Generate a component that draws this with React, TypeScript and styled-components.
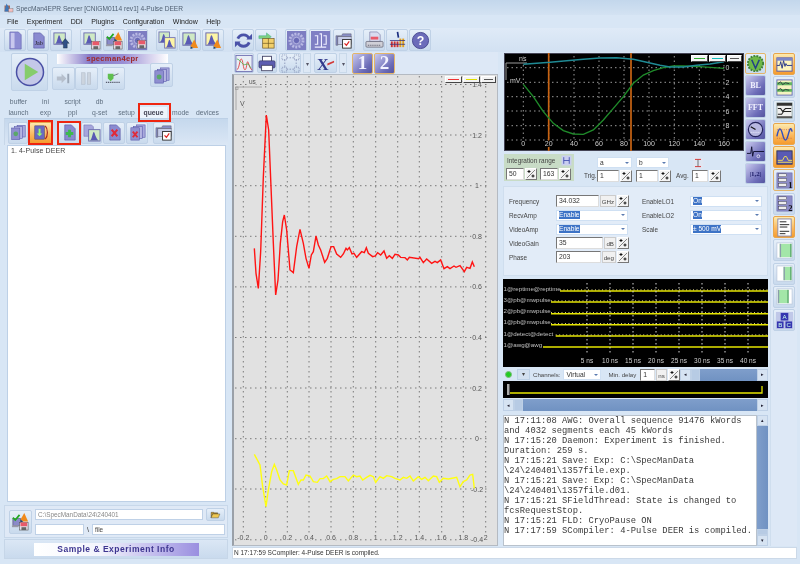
import React from "react";
import styled, { createGlobalStyle } from "styled-components";

const Global = createGlobalStyle`
  html, body { margin: 0; padding: 0; background: #d8e6f5; }
  * { box-sizing: border-box; }
`;

const Page = styled.div`
  width: 800px; height: 564px; overflow: hidden; display: flex; flex-direction: column;
  background: #d8e6f5; font-family: "Liberation Sans", Arial, sans-serif; font-size: 7px; color: #333;
  filter: blur(0.4px);
`;
const TitleBar = styled.div`
  height: 15px; flex: none; display: flex; align-items: center; gap: 2px; padding: 1px 0 0 4px;
  background: linear-gradient(#c3d7ec, #d3e2f2); font-size: 6.6px; color: #4f5f72;
`;
const MenuBar = styled.div`
  height: 13px; flex: none; display: flex; align-items: center; gap: 8.5px; padding-left: 7px;
  font-size: 7px; color: #222;
`;
const MainToolbar = styled.div`
  height: 24px; flex: none; display: flex; align-items: center; gap: 8px; padding-left: 4px;
  background: linear-gradient(#dfeaf7, #d2e1f2);
`;
const Group = styled.div<{ $gap?: number; $ml?: number; $mt?: number }>`
  display: flex; gap: ${p => p.$gap ?? 1}px; align-items: center;
  margin-left: ${p => p.$ml ?? 0}px; margin-top: ${p => p.$mt ?? 0}px;
`;
const ToolBtn = styled.div<{ $w?: number; $h?: number; $active?: boolean; $ring?: boolean }>`
  position: relative; flex: none; width: ${p => p.$w ?? 22}px; height: ${p => p.$h ?? 22}px;
  display: flex; align-items: center; justify-content: center; border-radius: 2px;
  border: 1px solid ${p => (p.$active ? "#e8a64c" : p.$ring ? "#e3b56a" : "#bfd1e6")};
  background: ${p => (p.$active ? "linear-gradient(#fdeaae, #fbb65a 60%, #f59c2f)" : "linear-gradient(#e6eff9, #c9daed)")};
`;
const Tile = styled(ToolBtn)`
  font-family: "Liberation Serif", serif; font-weight: 700; color: #f2f2ff;
  background: linear-gradient(135deg, #c9c9ee, #6c6cb8 70%, #55559f);
`;
const BigTile = styled(Tile)`
  font-size: 19px;
`;
const Drop = styled.div`
  width: 8px; height: 20px; display: flex; align-items: center; justify-content: center;
  border: 1px solid #c9d9ea; font-size: 6px; color: #556; background: #dde8f5;
`;
const RedFrame = styled.span<{ $inset: string }>`
  position: absolute; inset: ${p => p.$inset}; border: 2px solid #ee2510; pointer-events: none;
`;
const Body = styled.div`
  flex: 1; min-height: 0; display: flex; gap: 4px; padding: 0 3px 5px 4px;
`;
const LeftCol = styled.div`
  width: 224px; flex: none; display: flex; flex-direction: column;
`;
const CtrlPanel = styled.div`
  height: 44px; flex: none; display: flex; gap: 4px; padding: 1px 0 0 7px;
`;
const PlayBox = styled(ToolBtn)`
  width: 37px; height: 38px;
`;
const CtrlSide = styled.div`
  display: flex; flex-direction: column; gap: 3px; padding-top: 1px;
`;
const Banner = styled.div`
  width: 111px; height: 10px; margin-left: 5px; text-align: center; line-height: 10px; font-weight: 700;
  font-size: 7.6px; letter-spacing: 0.3px; color: #9e2a2a;
  background: linear-gradient(90deg, #fff 0, #8478c8 30%, #9a8fd4 60%, #fff 100%);
`;
const CtrlRow = styled.div`
  display: flex; align-items: flex-start;
`;
const Tabs = styled.div`
  height: 22px; flex: none; display: grid; grid-template-columns: repeat(8, 27px); grid-auto-rows: 11px;
  padding: 0 0 0 1px; text-align: center; line-height: 11px; font-size: 6.8px; color: #5f6f80;
`;
const Tab = styled.div<{ $active?: boolean }>`
  position: relative; font-weight: ${p => (p.$active ? 700 : 400)};
  background: ${p => (p.$active ? "#edf4fc" : "transparent")}; color: ${p => (p.$active ? "#445" : "inherit")};
`;
const QueueBar = styled.div`
  height: 27px; flex: none; display: flex; align-items: center; padding: 1px 0 0 3px; gap: 1px;
  background: linear-gradient(#c5d8ed, #dbe7f5); border-top: 1px solid #bcd0e6; border-left: 1px solid #c7d7e9;
`;
const QueueList = styled.div`
  flex: 1; margin: 0 2px 0 3px; background: #fff; border: 1px solid #bdd0e6; padding: 0 0 0 3px;
  font-size: 7px; line-height: 9px; color: #444; letter-spacing: 0.1px;
`;
const PathPanel = styled.div`
  height: 33px; flex: none; margin-top: 3px; display: flex; align-items: center; gap: 3px; padding: 0 2px 0 4px;
  background: #dfe9f6; border: 1px solid #c8d8ea;
`;
const PathFields = styled.div`
  flex: 1; display: flex; flex-direction: column; gap: 3px;
`;
const PathRow = styled.div`
  display: flex; gap: 3px; align-items: center;
`;
const PathInput = styled.div<{ $w?: number; $grow?: boolean; $dark?: boolean }>`
  height: 11px; width: ${p => (p.$w ? p.$w + "px" : "auto")}; flex: ${p => (p.$grow ? 1 : "none")};
  background: #fff; border: 1px solid #bfd1e7; padding-left: 2px; line-height: 9px; font-size: 6.4px;
  color: ${p => (p.$dark ? "#444" : "#888")};
`;
const SamplePanel = styled.div`
  height: 20px; flex: none; margin-top: 1px; display: flex; align-items: center; justify-content: center;
  background: linear-gradient(#dbe7f5, #c9daed); border: 1px solid #c6d6e8;
`;
const SampleBanner = styled.div`
  width: 165px; height: 13px; text-align: center; line-height: 13px; font-weight: 700; font-size: 8.5px;
  letter-spacing: 0.5px; color: #3d3590; background: linear-gradient(90deg, #fff 0, #f3f4fc 40%, #9a8fe0 100%);
`;
const RightArea = styled.div`
  flex: 1; min-width: 0; display: flex; flex-direction: column; gap: 1px;
`;
const Upper = styled.div`
  flex: 1; min-height: 0; display: flex;
`;
const Center = styled.div`
  width: 266px; flex: none; display: flex; flex-direction: column; margin-right: 4px;
`;
const PlotBar = styled.div`
  height: 22px; flex: none; display: flex; align-items: center; padding: 0 0 0 2px; gap: 2px;
  background: #dde8f6;
`;
const PlotBox = styled.div`
  position: relative; flex: 1; min-height: 0; background: #e1e1e1;
  border: 1px solid #b4bac2; border-left: 2px solid #9aa0a8;
`;
const PlotSvg = styled.svg`
  display: block; position: absolute; left: -2px; top: -1px;
`;
const Legend = styled.div`
  position: absolute; top: 1px; right: 1px; display: flex; gap: 1px; z-index: 1;
`;
const LegendBtn = styled.div<{ $color?: string; $w?: number }>`
  width: ${p => p.$w ?? 17}px; height: 7px; background: #f3f3f3; border: 1px solid #888; border-color: #fff #444 #444 #fff;
  display: flex; align-items: center; justify-content: center; font-size: 5px; line-height: 5px;
  &::after { content: ""; width: 70%; height: 1px; background: ${p => p.$color ?? "#333"}; }
`;
const RightCol = styled.div`
  width: 266px; flex: none; display: flex; flex-direction: column;
`;
const ScopeSection = styled.div`
  height: 133px; flex: none; display: flex; gap: 1px; padding: 1px 0 0 2px;
`;
const ScopeMain = styled.div`
  width: 240px; flex: none; display: flex; flex-direction: column; gap: 3px;
`;
const ScopeBox = styled.div`
  position: relative; height: 98px; background: #000; border: 1px solid #445;
`;
const ScopeSvg = styled.svg`
  display: block; position: absolute; left: -1px; top: -1px;
`;
const ScopeControls = styled.div`
  display: flex;
`;
const IntBox = styled.div`
  width: 70px; height: 27px; flex: none; background: #c8dcc6; padding: 1px 2px; display: flex; flex-direction: column; gap: 2px;
`;
const IntHead = styled.div`
  display: flex; align-items: center; justify-content: space-between; height: 11px; padding-left: 1px; font-size: 6.4px; color: #444;
`;
const IntRow = styled.div`
  display: flex; gap: 3px;
`;
const TrigGrid = styled.div`
  margin-left: 10px; display: grid; grid-template-columns: 13px 39px 40px 16px 29px; grid-template-rows: 13px 13px; align-items: center;
  font-size: 6.4px; color: #444; padding-top: 2px;
`;
const SelBox = styled.div<{ $w?: number }>`
  width: ${p => (p.$w ? p.$w + "px" : "100%")}; height: 11px; background: #fff; border: 1px solid #cfe0f3;
  display: flex; align-items: center; justify-content: space-between; padding: 0 2px; font-size: 6.6px; color: #333;
  &::after { content: ""; border: 2px solid transparent; border-top: 2.5px solid #5a7ab0; border-bottom: 0; }
`;
const Sel = styled.span`
  background: #3d73c6; color: #fff; line-height: 8px;
`;
const Spin = styled.div`
  flex: none; width: 12px; height: 12px; background: #f4f4f4; border: 1px solid; border-color: #fff #777 #777 #fff;
  display: flex; align-items: center; justify-content: center;
`;
const SpinField = styled.div`
  display: flex; gap: 1px; align-items: center;
`;
const NumBox = styled.div<{ $w: number }>`
  width: ${p => p.$w}px; height: 12px; background: #fff; border: 1px solid; border-color: #777 #ddd #ddd #777;
  padding-left: 2px; font-size: 6.8px; line-height: 10px; color: #333;
`;
const Unit = styled.div`
  height: 12px; padding: 0 1px; font-size: 6.2px; line-height: 11px; background: #f1f1f1; color: #444; border: 1px solid #ccc;
`;
const SideBtns = styled.div`
  display: flex; flex-direction: column; gap: 1px; width: 22px; flex: none;
`;
const SideTile = styled(Tile)<{ $dark?: boolean }>`
  font-size: ${p => (p.$dark ? 7 : 8)}px; height: 21px; width: 21px; color: ${p => (p.$dark ? "#20206a" : "#f2f2ff")};
`;
const ParamPanel = styled.div`
  height: 90px; flex: none; margin: 1px 0 0 1px; padding: 7px 0 0 5px; background: #e2ecf8; border: 1px solid #cfdeee;
  display: grid; grid-template-columns: 47px 73px 13px 48px 72px; grid-auto-rows: 14px; align-items: center;
  font-size: 6.4px; color: #444;
`;
const PulseBox = styled.div`
  height: 88px; flex: none; margin: 3px 0 0 1px; background: #000; position: relative;
`;
const Channels = styled.div`
  height: 13px; flex: none; margin: 1px 0 0 1px; display: flex; align-items: center; font-size: 6.1px; color: #444;
`;
const ChanLabel = styled.span<{ $l?: number; $r?: number }>`
  margin: 0 ${p => p.$r ?? 0}px 0 ${p => p.$l ?? 0}px; white-space: nowrap;
`;
const Led = styled.div`
  width: 7px; height: 7px; border-radius: 50%; background: #22cc22; margin: 0 5px 0 2px; border: 1px solid #7dbb7d;
`;
const SmallBtn = styled.div`
  width: 13px; height: 11px; background: #d2e0f0; border: 1px solid #bcd0e6; text-align: center; line-height: 8px; margin-right: 3px;
`;
const Slider = styled.div`
  height: 17px; flex: none; margin: 0 0 1px 1px; background: #000;
`;
const SliderSvg = styled.svg`
  display: block;
`;
const Scroll = styled.div<{ $w?: number; $v?: boolean }>`
  display: flex; flex-direction: ${p => (p.$v ? "column" : "row")}; flex: ${p => (p.$w ? "none" : 1)};
  width: ${p => (p.$w ? p.$w + "px" : "auto")}; height: ${p => (p.$v ? "auto" : "12px")};
  background: linear-gradient(${p => (p.$v ? "90deg, " : "")}#7f9ecb, #7092c2);
`;
const ScrollBtn = styled.div<{ $v?: boolean; $thumb?: boolean }>`
  flex: none; width: ${p => (p.$v ? "auto" : p.$thumb ? "9px" : "11px")}; height: ${p => (p.$v ? (p.$thumb ? "6px" : "11px") : "auto")};
  background: ${p => (p.$thumb ? "#b7cbe4" : "#d6e3f2")}; border: 1px solid #bed0e6; display: flex; align-items: center; justify-content: center;
  font-size: 5px; line-height: 5px; color: #223;
`;
const ScrollGrow = styled.div`
  flex: 1;
`;
const HScrollRow = styled.div`
  height: 12px; flex: none; margin: 0 0 0 1px; display: flex;
`;
const LogWrap = styled.div`
  flex: 1; min-height: 0; margin: 4px 0 0 1px; display: flex;
`;
const Log = styled.div`
  flex: 1; background: #fff; border: 1px solid #b9c2cc; padding: 0; overflow: hidden; white-space: pre;
  font-family: "Liberation Mono", "Courier New", monospace; font-size: 8.8px; line-height: 10px; color: #3a3a3a;
`;
const Rail = styled.div`
  flex: none; width: 27px; margin: 0 0 0 2px; padding: 1px 0 0 2px; display: flex; flex-direction: column; gap: 1.3px;
  background: #dde8f6; border-left: 1px solid #cfdeee;
`;
const Status = styled.div`
  height: 12px; flex: none; background: #fff; border: 1px solid #ccd9e8; font-size: 6.5px; line-height: 10px; padding-left: 1px; color: #333;
`;
const BlockSvg = styled.svg`
  display: block;
`;

type N = { n: string };
const doc = <path d="M5 2h7l4 4v12H5z" fill="#8a8ad0" stroke="#5c5ca8" strokeWidth=".7" />;
const Chart = ({ x, y, s, bg = "#cfe9c4" }: { x: number; y: number; s: number; bg?: string }) => (
  <g transform={`translate(${x} ${y}) scale(${s / 10})`}>
    <rect width="10" height="10" fill={bg} stroke="#6b6bb0" strokeWidth=".8" />
    <path d="M1 9.500C3 9 3.500 2 4.500 2S6 8 9 9.500z" fill="#5a5ab4" />
  </g>
);
const Floppy = ({ x, y }: { x: number; y: number }) => (
  <g transform={`translate(${x} ${y})`}>
    <rect width="9" height="8" fill="#e5e0e8" stroke="#555" strokeWidth=".6" />
    <rect x="1" width="7" height="4" fill="#e85a6a" />
    <rect x="2" y="5" width="5" height="3" fill="#666" />
  </g>
);
const Cone = ({ x, y }: { x: number; y: number }) => (
  <g transform={`translate(${x} ${y})`}>
    <path d="M4 0L8 9H3L0 7z" fill="#f08a1c" />
    <path d="M0 7l3 2-3 1z" fill="#246" />
  </g>
);
const gearEl = (
  <g>
    <rect x="0" y="0" width="20" height="20" fill="#7d7dc2" />
    <circle cx="10" cy="10" r="7" fill="#8e8ecb" stroke="#b9b9e4" strokeWidth="2.800" strokeDasharray="2 1.400" />
    <circle cx="10" cy="10" r="3.400" fill="#6a6ab6" stroke="#c4c4ea" strokeWidth=".8" />
  </g>
);
const stack = (
  <g>
    <rect x="9" y="2" width="9" height="13" fill="#a9a9dc" stroke="#55a" strokeWidth=".6" />
    <rect x="6" y="3.500" width="9" height="13" fill="#b5b5e2" stroke="#55a" strokeWidth=".6" />
    <rect x="3" y="5" width="9" height="13" fill="#8f8fd0" stroke="#55a" strokeWidth=".6" />
  </g>
);
const folderCheck = (
  <g>
    <path d="M1 5h6l1-2h9v3H3v9H1z" fill="#8a90c8" stroke="#556" strokeWidth=".5" />
    <rect x="3" y="6" width="14" height="8" fill="#c5cce8" stroke="#556" strokeWidth=".5" />
    <rect x="8" y="9" width="9" height="9" fill="#fff" stroke="#222" strokeWidth=".9" />
    <path d="M10 13l2 2 3-4" stroke="#d22" strokeWidth="1.300" fill="none" />
  </g>
);
const checkSave = (
  <g>
    <rect x="2" y="7" width="8" height="7" fill="#8a8ac8" stroke="#446" strokeWidth=".6" />
    <path d="M2 6l2.500 2.500L9 3" stroke="#2a2" strokeWidth="1.800" fill="none" />
    <Cone x={10} y={1} />
    <Floppy x={9} y={11} />
    <rect x="1" y="14" width="7" height="2" fill="#99a" />
  </g>
);
const wave = (c: string) => <path d="M2 11h3l1-4 1.500 7L9 6l1.500 6 1-3 1 2H18" fill="none" stroke={c} strokeWidth="1" />;
const winY = (
  <g>
    <rect x="2" y="3" width="16" height="14" fill="#fdf5bd" stroke="#5558a8" strokeWidth="1" />
    <rect x="2" y="3" width="16" height="3" fill="#7c86c8" />
  </g>
);
const green = (a: number, b: number) => (
  <g>
    <rect x="2" y="2" width="16" height="16" fill="#fff" stroke="#b8c6dc" strokeWidth=".8" />
    <rect x={a} y="3" width={b} height="14" fill="#a3e6a8" />
    <rect x={a} y="3" width="1.400" height="14" fill="#8a9cab" />
    <rect x={a + b - 1} y="3" width="1.400" height="14" fill="#58a86a" />
  </g>
);
const chip = (t: string) => (
  <g>
    <rect x="2" y="2" width="16" height="16" fill="#8c8cc8" stroke="#66a" strokeWidth=".6" />
    {[4, 9, 14].map(y => <rect key={y} x="4" y={y - 1} width="8" height="3" fill="#eee" stroke="#333" strokeWidth=".4" />)}
    <text x="14" y="18" fontSize="9" fontWeight="700" fontFamily="Liberation Serif" fill="#111">{t}</text>
  </g>
);

const icons: Record<string, React.ReactNode> = {
  page: <g><path d="M4 1h9l3 3v15H4z" fill="#8d8dd3" stroke="#6a6ab4" strokeWidth=".7" /><path d="M5 2h4v16H5z" fill="#c8c8ee" /></g>,
  jab: <g>{doc}<text x="6" y="15" fontSize="6.500" fontFamily="Liberation Serif" fill="#222">Jab</text></g>,
  chartUp: <g><Chart x={2} y={2} s={12} /><path d="M14 8l4 5h-2v5h-4v-5h-2z" fill="#2f4f86" stroke="#123" strokeWidth=".4" /></g>,
  chartSave: <g><Chart x={2} y={2} s={12} /><Floppy x={10} y={11} /></g>,
  checkSave,
  gearSave: <g>{gearEl}<Floppy x={10} y={10} /></g>,
  chartStack: <g><Chart x={1} y={1} s={11} /><Chart x={7} y={7} s={11} bg="#fdf5a6" /></g>,
  chartMat: <g><Chart x={2} y={2} s={13} /><Cone x={10} y={9} /></g>,
  chartMatY: <g><Chart x={2} y={2} s={13} bg="#fdf5a6" /><Cone x={10} y={9} /></g>,
  refresh: <g fill="none" stroke="#4a52a8" strokeWidth="3"><path d="M16 8A6.500 6.500 0 0 0 4 8" /><path d="M4 12A6.500 6.500 0 0 0 16 12" /><path d="M13 9h6V3z" fill="#4a52a8" stroke="none" /><path d="M7 11H1v6z" fill="#4a52a8" stroke="none" /></g>,
  cube: <g><path d="M2 5h8V2l5 4-5 4V8H2z" fill="#7fd07f" stroke="#3a8" strokeWidth=".5" /><rect x="6" y="8" width="12" height="10" fill="#f2cf6a" stroke="#6b5520" strokeWidth=".7" /><path d="M6 13h12M12 8v10" stroke="#6b5520" strokeWidth=".7" /></g>,
  gear: gearEl,
  scale: <g><rect x="0" y="0" width="20" height="20" fill="#7f7fc4" /><path d="M4 5h3v9H4M9 3h2v14H9M13 5h3v9h-3M4 17h12" stroke="#eef" strokeWidth="1.200" fill="none" /></g>,
  folderCheck,
  printRed: <g><path d="M5 1h8l3 3v7H5z" fill="#d9dcf0" stroke="#558" strokeWidth=".5" /><rect x="6" y="6" width="8" height="3" fill="#e85a6a" /><rect x="1" y="11" width="18" height="6" rx="1" fill="#d0d0d8" stroke="#445" strokeWidth=".6" /><path d="M3 15h14" stroke="#445" strokeDasharray="1 1" /></g>,
  ruler: <g><path d="M10 1l1 6" stroke="#1d2f80" strokeWidth="1.800" /><g fill="#d03030">{[3, 6, 9].map(x => <rect key={x} x={x} y="11" width="2" height="6" />)}</g><g fill="#e0a020">{[12, 15].map(x => <rect key={x} x={x} y="8" width="2" height="9" />)}</g><path d="M2 10h16M2 14h16" stroke="#303080" strokeWidth=".8" /></g>,
  help: <g><circle cx="10" cy="10" r="8.500" fill="#6c6cba" stroke="#494990" /><text x="10" y="15" fontSize="13" fontWeight="700" textAnchor="middle" fontFamily="Liberation Sans" fill="#fff">?</text></g>,
  peaks: <g><rect x="1" y="1" width="18" height="18" fill="#e9eef6" stroke="#6c6cb0" /><path d="M2 17C5 16 5 5 7 5s2 12 4 12 2-9 3-9 2 8 5 9" fill="none" stroke="#d33" strokeWidth=".9" /><path d="M2 5C6 5 8 13 12 11s4 3 6 4" fill="none" stroke="#3a3" strokeWidth=".8" /></g>,
  printer: <g><rect x="5" y="2" width="10" height="6" fill="#fff" stroke="#446" /><rect x="1" y="7" width="18" height="8" rx="1.500" fill="#5d5db0" stroke="#335" strokeWidth=".6" /><rect x="4" y="12" width="12" height="6" fill="#fff" stroke="#446" /></g>,
  corners: <g stroke="#7a86ac" fill="none" strokeWidth=".8"><rect x="1" y="1" width="5" height="5" strokeDasharray="1 1" /><rect x="14" y="1" width="5" height="5" strokeDasharray="1 1" /><rect x="1" y="14" width="5" height="5" strokeDasharray="1 1" /><rect x="14" y="14" width="5" height="5" strokeDasharray="1 1" /><path d="M6 4h8M6 16h8M4 6v8M16 6v8" strokeDasharray="1.500 1.500" /></g>,
  xaxis: <g><text x="1" y="17" fontSize="17" fontWeight="700" fontFamily="Liberation Serif" fill="#333a8c">X</text><path d="M12 10l7-3v2l-7 3z" fill="#d23a3a" /></g>,
  play: <g><circle cx="10" cy="10" r="9" fill="#c4c8e8" stroke="#494fa5" strokeWidth="1" /><path d="M6.500 4.500v11l9-5.500z" fill="#86cc6c" /></g>,
  step: <g fill="#b6bfcc"><path d="M3 8h5V5l5 5-5 5v-3H3z" /><rect x="14" y="5" width="2" height="10" fill="#9aa6b6" /></g>,
  pause: <g fill="#ccd4de" stroke="#aab4c2" strokeWidth=".5"><rect x="5" y="4" width="3.500" height="12" /><rect x="11" y="4" width="3.500" height="12" /></g>,
  plug: <g><path d="M4 5h6v5l-3 3-3-3z" fill="#5fbf4f" /><path d="M10 7l5-2M2 14h15" stroke="#334" strokeWidth="1" strokeDasharray="1.400 .8" /></g>,
  stack: <g>{stack}<circle cx="7.500" cy="11.500" r="2.600" fill="#5aa86a" /></g>,
  orangeList: <g><rect x="4" y="3" width="10" height="14" fill="#6a6ac0" stroke="#336" strokeWidth=".5" /><path d="M9 6v6" stroke="#9f6" strokeWidth="2" /><path d="M6 11h6l-3 3z" fill="#9f6" /><path d="M15 3c3 3 3 11 0 14" stroke="#a22" strokeWidth="1.200" fill="none" /></g>,
  docPlus: <g>{doc}<path d="M10 7v8M6 11h8" stroke="#3cb84f" strokeWidth="3" /></g>,
  chartStack2: <g><path d="M2 2h8l2 2v10H2z" fill="#a6a6dc" stroke="#66a" strokeWidth=".5" /><Chart x={7} y={7} s={12} /></g>,
  docX: <g>{doc}<path d="M7 7l6 7M13 7l-6 7" stroke="#e02a3a" strokeWidth="2.200" /></g>,
  stackX: <g>{stack}<path d="M5 9l5 6M10 9l-5 6" stroke="#e02a3a" strokeWidth="2" /></g>,
  folder: <g><path d="M2 16V6h5l1 1h6v2H5z" fill="#c79a2a" stroke="#333" strokeWidth=".7" /><path d="M2 16l3-7h13l-3 7z" fill="#f0c850" stroke="#333" strokeWidth=".7" /></g>,
  rngV: <g><circle cx="10" cy="10" r="8" fill="#6fb848" stroke="#3f8038" strokeWidth="2" strokeDasharray="2 1.200" /><path d="M6 6l4 9 4-9" stroke="#223f86" strokeWidth="1.600" fill="none" /></g>,
  gauge: <g><circle cx="10" cy="10" r="7.500" fill="#b7b8e0" stroke="#23235a" strokeWidth="1.200" /><path d="M10 10l-5-3" stroke="#111" strokeWidth="1.200" /><path d="M5 13h10" stroke="#eef" strokeDasharray="1 1" /></g>,
  spike: <g><path d="M1 12h4l1-7 1 10 1-5h11" fill="none" stroke="#113" strokeWidth="1" /><circle cx="13" cy="15" r="1.500" fill="none" stroke="#dde" /></g>,
  w1: <g>{winY}{wave("#2a3a8a")}</g>,
  w2: <g><rect x="2" y="2" width="16" height="16" fill="#f5f3c0" stroke="#6a70b8" /><path d="M2 6h16M2 13h16" stroke="#62b462" strokeWidth="3" /><path d="M3 6l3-2 2 3 3-2 4 1M3 13l3-2 2 3 3-2 4 1" stroke="#223" fill="none" strokeWidth=".8" /></g>,
  w3: <g><rect x="2" y="2" width="16" height="16" fill="#efefef" stroke="#9aa" /><rect x="2" y="2" width="16" height="3" fill="#333" /><path d="M3 8h3l2 3 3-3h6M3 14h4l2-3h8" stroke="#222" fill="none" strokeWidth="1.100" /><rect x="2" y="16" width="16" height="2" fill="#555" /></g>,
  w4: <g><path d="M2 13C4 3 6 3 8 11s4 8 6 0 3-7 4-3" fill="none" stroke="#3050c0" strokeWidth="1.500" /><path d="M2 6h16M2 15h16" stroke="#a55" strokeWidth=".7" strokeDasharray="1 1.400" /></g>,
  w5: <g><rect x="2" y="3" width="16" height="14" fill="#5a5ab4" stroke="#335" /><path d="M3 13h5l2-4h2l2 4h4M3 15h15" stroke="#f6df52" strokeWidth="1" fill="none" /></g>,
  c1: chip("1"),
  c2: chip("2"),
  notes: <g><rect x="3" y="1" width="14" height="18" fill="#fff" stroke="#88a" /><path d="M5 4h7M5 7h10M5 9.500h8M5 14h10M5 16.500h6" stroke="#222" /></g>,
  g1: green(5, 12),
  g2: green(9, 8),
  g3: green(3, 11),
  abc: <g><rect x="1" y="1" width="18" height="18" fill="#c0c8e8" /><rect x="6" y="2" width="8" height="8" fill="#3636b0" /><rect x="2" y="11" width="7" height="7" fill="#3636b0" /><rect x="11" y="11" width="7" height="7" fill="#3636b0" /><g fontSize="6.500" fontFamily="Liberation Sans" textAnchor="middle" fill="#cfe"><text x="10" y="8.500">A</text><text x="5.500" y="17">B</text><text x="14.500" y="17">C</text></g></g>,
  appicon: <g><rect x="1" y="5" width="11" height="12" fill="#a06a5a" /><path d="M5 1l9 16H1z" fill="#3c76b8" /><rect x="9" y="11" width="9" height="7" fill="#f2c0c0" stroke="#555" strokeWidth=".6" /></g>,
  range: <g><rect x="1" y="1" width="18" height="18" fill="#c9cef0" /><path d="M5 4v12M15 4v12M5 10h10" stroke="#3040a8" strokeWidth="1.400" /></g>,
  ibeam: <g><rect x="1" y="1" width="18" height="18" fill="#dfe6f2" /><path d="M5 4h10M5 16h10" stroke="#d33" strokeWidth="1.600" /><path d="M10 4v12" stroke="#666" strokeWidth="1.500" /></g>,
};

const Icon = ({ n, s = 19 }: N & { s?: number }) => (
  <svg width={s} height={s} viewBox="0 0 20 20">{icons[n]}</svg>
);
const SpinIcon = () => (
  <svg width="10" height="10" viewBox="0 0 10 10">
    <path d="M9 1L1 9" stroke="#555" strokeWidth=".7" />
    <path d="M3 1v3M1.500 2.500h3M7 5.500v3M5.500 7h3" stroke="#111" strokeWidth="1" />
  </svg>
);
const SpinBtn = () => <Spin><SpinIcon /></Spin>;

const T = ({ n, $active, $ring, w, h, s, children }: { n: string; $active?: boolean; $ring?: boolean; w?: number; h?: number; s?: number; children?: React.ReactNode }) => (
  <ToolBtn $w={w} $h={h} $active={$active} $ring={$ring}><Icon n={n} s={s} />{children}</ToolBtn>
);

const redPts: number[][] = [[73,535],[78,610],[85,655],[92,545],[100,320],[109,135],[116,180],[123,350],[130,520],[137,675],[144,630],[151,520],[158,455],[163,435],[170,480],[180,600],[190,608],[200,530],[210,478],[220,520],[228,565],[237,595],[244,555],[250,545],[258,498],[265,525],[272,540],[284,577],[292,565],[303,530],[311,530],[320,552],[332,562],[340,552],[348,535],[352,540],[358,533],[366,552],[372,550],[380,562],[395,545],[403,548],[409,533],[415,550],[428,560],[436,558],[443,548],[452,555],[462,543],[470,565],[478,557],[487,565],[495,553],[505,555],[512,562],[525,563],[532,570],[538,562],[566,566],[570,562],[580,578],[590,567],[605,580],[615,574],[622,578],[632,570],[642,596],[652,590],[660,596],[672,588],[678,592],[690,587],[703,605],[710,592],[720,595],[727,576],[733,590]];
const yelPts: number[][] = [[73,163],[90,195],[98,260],[108,320],[115,270],[125,215],[133,193],[140,210],[150,240],[160,252],[170,255],[178,212],[190,212],[205,253],[213,240],[220,240],[228,225],[240,228],[250,245],[262,247],[270,236],[280,236],[290,228],[300,245],[310,238],[320,236],[330,230],[345,230],[355,243],[370,225],[380,230],[390,228],[398,240],[410,232],[420,226],[430,230],[437,247],[450,230],[460,235],[470,227],[485,230],[495,235],[510,240],[520,232],[530,235],[540,228],[550,243],[565,230],[575,238],[585,232],[595,242],[610,228],[620,230],[628,247],[640,235],[655,237],[670,234],[680,232],[690,260],[700,245],[710,240],[720,225],[728,223],[733,265]];
const grnPts: number[][] = [[70,133],[100,170],[130,215],[160,250],[190,272],[220,282],[250,283],[280,270],[310,240],[340,205],[370,170],[400,130],[430,105],[460,92],[490,83],[520,78],[550,78],[600,80],[672,85]];
const teaPts: number[][] = [[70,73],[110,70],[150,67],[200,62],[250,58],[300,54],[350,53],[400,58],[440,67],[480,76],[510,81],[550,81],[590,76],[630,72],[672,65]];
const pts = (a: number[][], ox: number, oy: number) => a.map(([x, y]) => `${ox + x / 3},${oy + y / 3}`).join(" ");

const vGrid = [243.3,265.7,287.3,309,331,353.3,375.7,397.7,419.3,441.7,463.3,485.7];
const xLab = ["-0.2","0","0.2","0.4","0.6","0.8","1","1.2","1.4","1.6","1.8","2"];
const hGrid = [84.5,135,185.7,236.3,286.9,337.5,388,438.7,489,539.8];
const yLab = ["1.4","1.2","1","0.8","0.6","0.4","0.2","0","-0.2","-0.4"];

const MainPlot = () => (
  <PlotSvg width="266" height="472" viewBox="232 74 266 472">
    <g stroke="#7a7a7a" strokeWidth="1" strokeDasharray="1.500 3.500">
      {vGrid.map(x => <line key={x} x1={x} x2={x} y1="76" y2="533" />)}
      {hGrid.map(y => <line key={y} x1="235" x2="490" y1={y} y2={y} />)}
    </g>
    <path d="M236 110V87H262" fill="none" stroke="#a8a8a8" />
    <rect x="235.500" y="87" width="2.500" height="2.500" fill="none" stroke="#999" strokeWidth=".7" />
    <g fontFamily="Liberation Sans" fontSize="7" fill="#555" stroke="#e1e1e1" strokeWidth="2" paintOrder="stroke">
      <text x="249" y="84" fontSize="6.500">us</text>
      <text x="240" y="106">V</text>
      {vGrid.map((x, i) => <text key={x} x={x} y="540" textAnchor="middle">{xLab[i]}</text>)}
      {hGrid.map((y, i) => <text key={y} x="477" y={y + 2.500} textAnchor="middle">{yLab[i]}</text>)}
    </g>
    <polyline points={pts(yelPts, 230, 400)} fill="none" stroke="#ffff10" strokeWidth="1.400" />
    <polyline points={pts(redPts, 230, 70)} fill="none" stroke="#ff1414" strokeWidth="1.400" />
  </PlotSvg>
);

const ScopePlot = () => (
  <ScopeSvg width="240" height="98" viewBox="504 53 240 98">
    <g stroke="#9a9a9a" strokeWidth="1" strokeDasharray="1.500 3">
      {[523.3,548.7,574,599,624,649,674.3,699.3,724].map(x => <line key={x} x1={x} x2={x} y1="56" y2="140" />)}
      {[67.7,82.3,96.7,111,125.700,140].map(y => <line key={y} x1="507" x2="740" y1={y} y2={y} />)}
    </g>
    <path d="M506 80V63H527" fill="none" stroke="#999" />
    <line x1="548.700" x2="548.700" y1="53" y2="151" stroke="#c86414" strokeWidth="1.700" />
    <line x1="631" x2="631" y1="53" y2="151" stroke="#c86414" strokeWidth="1.700" />
    <polyline points={pts(grnPts, 500, 40)} fill="none" stroke="#1f8a2a" strokeWidth="1.400" />
    <polyline points={pts(teaPts, 500, 40)} fill="none" stroke="#1f8a94" strokeWidth="1.500" />
    <g fontFamily="Liberation Sans" fontSize="7" fill="#ccc" stroke="#000" strokeWidth="2" paintOrder="stroke">
      <text x="519" y="61">ns</text>
      <text x="510" y="83">mV</text>
      {[["0",523.3],["20",548.7],["40",574],["60",599],["80",624],["100",649],["120",674.3],["140",699.3],["160",724]].map(([t, x]) => <text key={t} x={x} y="145.500" textAnchor="middle">{t}</text>)}
      {[["0",70],["2",84.500],["4",99],["6",113.500],["8",128]].map(([t, y]) => <text key={t} x="727.500" y={y} textAnchor="middle">{t}</text>)}
    </g>
  </ScopeSvg>
);

const pulseRows: [string, number, number][] = [
  ["1@reptime@reptime", 290, 560], ["3@pb@mwpulse", 301, 551], ["2@pb@mwpulse", 312.7, 551],
  ["1@pb@mwpulse", 323.7, 551], ["1@detect@detect", 335, 555.7], ["1@awg@awg", 346, 543],
];
const PulsePlot = () => (
  <BlockSvg width="265" height="88" viewBox="503 278 265 88">
    {pulseRows.map(([t, y, x]) => (
      <g key={t}>
        <line x1={x} x2="768" y1={y} y2={y} stroke="#e6e600" strokeWidth="1.400" />
        {y < 340 && <line x1={x} x2="768" y1={y - 1.200} y2={y - 1.200} stroke="#fff6a0" strokeWidth=".8" strokeDasharray="1 2.500" />}
        <text x="503.500" y={y - 0.500} fontFamily="Liberation Sans" fontSize="6.200" fill="#c0c0c0">{t}</text>
      </g>
    ))}
    {[587,610,633,656,679,702,725,748].map((x, i) => (
      <g key={x}>
        <line x1={x} x2={x} y1="282" y2="353" stroke="#d8d8d8" strokeDasharray="1.500 2.500" />
        <text x={x} y="361.500" textAnchor="middle" fontFamily="Liberation Sans" fontSize="6.500" fill="#d0d0d0">{(i + 1) * 5} ns</text>
      </g>
    ))}
  </BlockSvg>
);

const logText = `N 17:11:08 AWG: Overall sequence 91476 kWords
and 4032 segments each 45 kWords
N 17:15:20 Daemon: Experiment is finished.
Duration: 259 s.
N 17:15:21 Save: Exp: C:\\SpecManData
\\24\\240401\\1357file.exp.
N 17:15:21 Save: Exp: C:\\SpecManData
\\24\\240401\\1357file.d01.
N 17:15:21 SFieldThread: State is changed to
fcsRequestStop.
N 17:15:21 FLD: CryoPause ON
N 17:17:59 SCompiler: 4-Pulse DEER is compiled.`;

const HScroll = () => (
  <Scroll>
    <ScrollBtn>◂</ScrollBtn>
    <ScrollBtn $thumb />
    <ScrollGrow />
    <ScrollBtn>▸</ScrollBtn>
  </Scroll>
);

const Field = ({ v, u, w }: { v: string; u?: string; w: number }) => (
  <SpinField>
    <NumBox $w={w}>{v}</NumBox>
    {u && <Unit>{u}</Unit>}
    <SpinBtn />
  </SpinField>
);

export default function App() {
  return (
    <Page>
      <Global />
      <TitleBar><Icon n="appicon" s={10} />SpecMan4EPR Server [CNIGM0114 rev1] 4-Pulse DEER</TitleBar>
      <MenuBar>{["File","Experiment","DDI","Plugins","Configuration","Window","Help"].map(m => <span key={m}>{m}</span>)}</MenuBar>
      <MainToolbar>
        <Group><T n="page" /><T n="jab" /><T n="chartUp" /></Group>
        <Group><T n="chartSave" /><T n="checkSave" /><T n="gearSave" /></Group>
        <Group><T n="chartStack" /><T n="chartMat" /><T n="chartMatY" /></Group>
        <Group><T n="refresh" /><T n="cube" /></Group>
        <Group $gap={2}><T n="gear" /><T n="scale" /><T n="folderCheck" /></Group>
        <Group><T n="printRed" /><T n="ruler" /><T n="help" /></Group>
      </MainToolbar>
      <Body>
        <LeftCol>
          <CtrlPanel>
            <PlayBox><Icon n="play" s={30} /></PlayBox>
            <CtrlSide>
              <Banner>specman4epr</Banner>
              <CtrlRow>
                <T n="step" w={23} h={23} />
                <T n="pause" w={23} h={23} />
                <Group $ml={4}><T n="plug" w={23} h={23} /></Group>
                <Group $ml={25} $mt={-4}><T n="stack" w={23} h={24} /></Group>
              </CtrlRow>
            </CtrlSide>
          </CtrlPanel>
          <Tabs>
            {["buffer","ini","script","db"].map(t => <Tab key={t}>{t}</Tab>)}
            <span /><span /><span /><span />
            {["launch","exp","ppl","q-set","setup"].map(t => <Tab key={t}>{t}</Tab>)}
            <Tab $active>queue<RedFrame $inset="-4px -4px -4px -2px" /></Tab>
            <Tab>mode</Tab>
            <Tab>devices</Tab>
          </Tabs>
          <QueueBar>
            <T n="stack" w={20} />
            <ToolBtn $active $w={23}><Icon n="orangeList" /><RedFrame $inset="-3px -2px -2px -2px" /></ToolBtn>
            <Group $ml={5}>
              <ToolBtn><Icon n="docPlus" /><RedFrame $inset="-2px -2px -2px -2px" /></ToolBtn>
              <T n="chartStack2" w={21} />
              <T n="docX" />
              <T n="stackX" />
            </Group>
            <Group $ml={4}><T n="folderCheck" /></Group>
          </QueueBar>
          <QueueList>1. 4-Pulse DEER</QueueList>
          <PathPanel>
            <T n="checkSave" w={23} h={24} />
            <PathFields>
              <PathRow>
                <PathInput $grow>C:\SpecManData\24\240401</PathInput>
                <T n="folder" w={19} h={13} s={11} />
              </PathRow>
              <PathRow>
                <PathInput $w={49} />
                <span>\</span>
                <PathInput $grow $dark>file</PathInput>
              </PathRow>
            </PathFields>
          </PathPanel>
          <SamplePanel><SampleBanner>Sample &amp; Experiment Info</SampleBanner></SamplePanel>
        </LeftCol>
        <RightArea>
          <Upper>
            <Center>
              <PlotBar>
                <T n="peaks" w={20} h={20} />
                <Group $ml={1}><T n="printer" w={20} h={20} /></Group>
                <T n="corners" w={22} h={20} />
                <Drop>▾</Drop>
                <Group $ml={1}><T n="xaxis" w={23} h={20} /></Group>
                <Drop>▾</Drop>
                <Group $gap={1} $ml={3}>
                  <BigTile $ring $w={21} $h={21}>1</BigTile>
                  <BigTile $ring $w={21} $h={21}>2</BigTile>
                </Group>
              </PlotBar>
              <PlotBox>
                <MainPlot />
                <Legend><LegendBtn $color="#e33" /><LegendBtn $color="#dd0" /><LegendBtn $w={15} $color="#555" /></Legend>
              </PlotBox>
            </Center>
            <RightCol>
              <ScopeSection>
                <ScopeMain>
                  <ScopeBox>
                    <ScopePlot />
                    <Legend><LegendBtn $color="#3a3" /><LegendBtn $color="#1bb" /><LegendBtn $w={15} $color="#555" /></Legend>
                  </ScopeBox>
                  <ScopeControls>
                    <IntBox>
                      <IntHead>Integration range<Icon n="range" s={11} /></IntHead>
                      <IntRow><Field v="50" w={18} /><Field v="163" w={18} /></IntRow>
                    </IntBox>
                    <TrigGrid>
                      <span />
                      <SelBox $w={35}>a</SelBox>
                      <SelBox $w={33}>b</SelBox>
                      <span />
                      <Icon n="ibeam" s={12} />
                      <span>Trig.</span>
                      <Field v="1" w={22} />
                      <Field v="1" w={22} />
                      <span>Avg.</span>
                      <Field v="1" w={16} />
                    </TrigGrid>
                  </ScopeControls>
                </ScopeMain>
                <SideBtns>
                  <ToolBtn $ring $w={21} $h={21}><Icon n="rngV" /></ToolBtn>
                  <SideTile>BL</SideTile>
                  <SideTile>FFT</SideTile>
                  <SideTile><Icon n="gauge" /></SideTile>
                  <SideTile><Icon n="spike" /></SideTile>
                  <SideTile $dark>|1,2|</SideTile>
                </SideBtns>
              </ScopeSection>
              <ParamPanel>
                <span>Frequency</span>
                <Field v="34.032" w={46} u="GHz" />
                <span />
                <span>EnableLO1</span>
                <SelBox><Sel>On</Sel></SelBox>
                <span>RecvAmp</span>
                <SelBox $w={72}><Sel>Enable</Sel></SelBox>
                <span />
                <span>EnableLO2</span>
                <SelBox><Sel>On</Sel></SelBox>
                <span>VideoAmp</span>
                <SelBox $w={72}><Sel>Enable</Sel></SelBox>
                <span />
                <span>Scale</span>
                <SelBox><Sel>± 500 mV</Sel></SelBox>
                <span>VideoGain</span>
                <Field v="35" w={51} u="dB" />
                <span /><span /><span />
                <span>Phase</span>
                <Field v="203" w={48} u="deg" />
              </ParamPanel>
              <PulseBox><PulsePlot /></PulseBox>
              <Channels>
                <Led />
                <SmallBtn>▾</SmallBtn>
                <ChanLabel $r={3}>Channels:</ChanLabel>
                <SelBox $w={38}>Virtual</SelBox>
                <ChanLabel $l={7} $r={4}>Min. delay</ChanLabel>
                <Field v="1" w={15} u="ns" />
                <HScroll />
              </Channels>
              <Slider>
                <SliderSvg width="265" height="17" viewBox="503 380 265 17">
                  <path d="M510 392H762V385" fill="none" stroke="#e6e600" strokeWidth="1.300" />
                  <rect x="507" y="383" width="2.500" height="11" fill="#aaa" />
                </SliderSvg>
              </Slider>
              <HScrollRow><HScroll /></HScrollRow>
              <LogWrap>
                <Log>{logText}</Log>
                <Scroll $w={11} $v>
                  <ScrollBtn $v>▴</ScrollBtn>
                  <ScrollGrow />
                  <ScrollBtn $v $thumb />
                  <ScrollBtn $v>▾</ScrollBtn>
                </Scroll>
              </LogWrap>
            </RightCol>
            <Rail>
              <T n="w1" $active />
              <T n="w2" />
              <T n="w3" />
              <T n="w4" $active />
              <T n="w5" $active />
              <T n="c1" $ring />
              <T n="c2" />
              <T n="notes" $active />
              <T n="g1" />
              <T n="g2" />
              <T n="g3" />
              <T n="abc" />
            </Rail>
          </Upper>
          <Status>N 17:17:59 SCompiler: 4-Pulse DEER is compiled.</Status>
        </RightArea>
      </Body>
    </Page>
  );
}
